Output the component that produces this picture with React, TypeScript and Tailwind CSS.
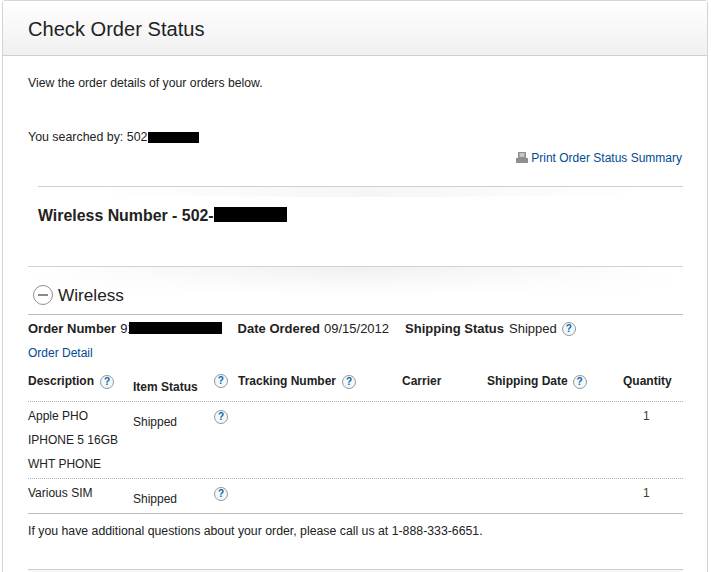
const F = "font-['Liberation_Sans',Arial,sans-serif]";

function Help({ className = "" }: { className?: string }) {
  return (
    <span className={`inline-flex h-[14px] w-[14px] shrink-0 items-center justify-center rounded-full border border-[#8f989e] bg-[#f4f8fa] text-[10px] leading-none font-bold text-[#0a66ab] ${className}`}>
      ?
    </span>
  );
}

function Printer() {
  return (
    <svg width="12" height="11" viewBox="0 0 12 11" className="mr-[3px] shrink-0 -translate-y-[1px]">
      <path d="M2 0h8v6H2z M3.5 1.5v1h5v-1z M3.5 3.5v1h5v-1z" fill="#8f8f8f" fillRule="evenodd" />
      <path d="M0 6h12v5H0z" fill="#8f8f8f" />
    </svg>
  );
}

const cols = "grid grid-cols-[105px_105px_164px_85px_136px_60px]";

export default function App() {
  return (
    <div className={`${F} h-[572px] w-[711px] overflow-hidden bg-white text-[12px] leading-[16px] text-[#222]`}>
      <div className="ml-[2px] h-[590px] w-[706px] rounded-t-[3px] border border-[#d4d4d4]">
        <div className="flex h-[55px] items-center border-b border-[#d0d0d0] bg-gradient-to-b from-white to-[#f0f0f0] pt-[2px] pl-[25px]">
          <h1 className="text-[20.1px] leading-[26px] font-normal text-[#222]">Check Order Status</h1>
        </div>

        <div className="pr-[24px] pl-[25px]">
          <p className="mt-[19px] text-[12.25px]">View the order details of your orders below.</p>
          <div className="mt-[38px] flex items-center text-[12.4px]">
            <span>You searched by: 502</span>
            <span className="ml-[1px] h-[11px] w-[51px] bg-black" />
          </div>
          <div className="mt-[5px] flex items-center justify-end pr-[1px] text-[#004b91]">
            <Printer />
            <span>Print Order Status Summary</span>
          </div>

          <div className="relative mt-[20px] ml-[10px] border-t border-[#cfcfcf]">
            <div className="absolute top-0 right-[30px] left-[50px] h-[10px] rounded-b-[100%] bg-gradient-to-r from-white via-[#f6f6f6] to-white" />
            <div className="relative flex h-[79px] items-start pt-[20px]">
              <span className="text-[15.9px] leading-[18px] font-bold">Wireless Number - 502-</span>
              <span className="h-[15px] w-[73px] bg-black" />
            </div>
          </div>

          <div className="relative h-[48px] border-t border-[#d2d2d2]">
            <div className="absolute inset-x-0 top-0 h-[28px] bg-gradient-to-b from-[#f0f0f0] to-white" />
            <div className="absolute inset-x-0 top-0 h-[28px] bg-gradient-to-r from-white via-transparent to-white" />
            <div className="relative flex items-center pt-[18px] pl-[5px]">
              <span className="flex h-[20px] w-[20px] items-center justify-center rounded-full border border-[#8f8f8f] bg-white">
                <span className="h-[2px] w-[10px] bg-[#8a8a8a]" />
              </span>
              <span className="ml-[5px] text-[17.2px] leading-[20px] text-[#222]">Wireless</span>
            </div>
          </div>

          <div className="flex h-[29px] items-start border-t border-[#bdbdbd] pt-[6px] text-[13px]">
            <span className="font-bold">Order Number</span>
            <span className="ml-[4px]">91</span>
            <span className="mt-[1px] -ml-[6px] h-[12px] w-[93px] bg-black" />
            <span className="ml-[16px] font-bold">Date Ordered</span>
            <span className="ml-[4px]">09/15/2012</span>
            <span className="ml-[16px] font-bold">Shipping Status</span>
            <span className="ml-[5px]">Shipped</span>
            <Help className="mt-[1px] ml-[5px]" />
          </div>

          <div className="mt-[2px] text-[#004b91]">Order Detail</div>

          <div className={`${cols} mt-[12px] h-[29px] border-b border-dotted border-[#b0b0b0] font-bold`}>
            <div className="flex h-[16px] items-center">
              Description <Help className="mt-[1px] ml-[6px]" />
            </div>
            <div className="flex items-start">
              <span className="mt-[6px]">Item Status</span>
              <Help className="mt-[1px] ml-[16px]" />
            </div>
            <div className="flex h-[16px] items-center">
              Tracking Number <Help className="mt-[1px] ml-[6px]" />
            </div>
            <div>Carrier</div>
            <div className="flex h-[16px] items-center">
              Shipping Date <Help className="mt-[1px] ml-[5px]" />
            </div>
            <div>Quantity</div>
          </div>

          <div className={`${cols} h-[77px] border-b border-dotted border-[#b0b0b0]`}>
            <div className="pt-[2px] leading-[24px]">
              <div>Apple PHO</div>
              <div>IPHONE 5 16GB</div>
              <div>WHT PHONE</div>
            </div>
            <div className="flex items-start pt-[12px]">
              <span>Shipped</span>
              <Help className="mt-[-4px] ml-[37px]" />
            </div>
            <div />
            <div />
            <div />
            <div className="pt-[6px] pl-[20px] text-[#4a3a1c]">1</div>
          </div>

          <div className={`${cols} h-[35px] border-b border-[#bdbdbd]`}>
            <div className="pt-[6px]">Various SIM</div>
            <div className="flex items-start pt-[12px]">
              <span>Shipped</span>
              <Help className="mt-[-4px] ml-[37px]" />
            </div>
            <div />
            <div />
            <div />
            <div className="pt-[6px] pl-[20px] text-[#4a3a1c]">1</div>
          </div>

          <p className="mt-[9px] text-[12.3px]">
            If you have additional questions about your order, please call us at 1-888-333-6651.
          </p>

          <div className="mt-[30px] h-[6px] border-t border-[#cfcfcf] bg-gradient-to-b from-[#f5f5f5] to-white" />
        </div>
      </div>
    </div>
  );
}
